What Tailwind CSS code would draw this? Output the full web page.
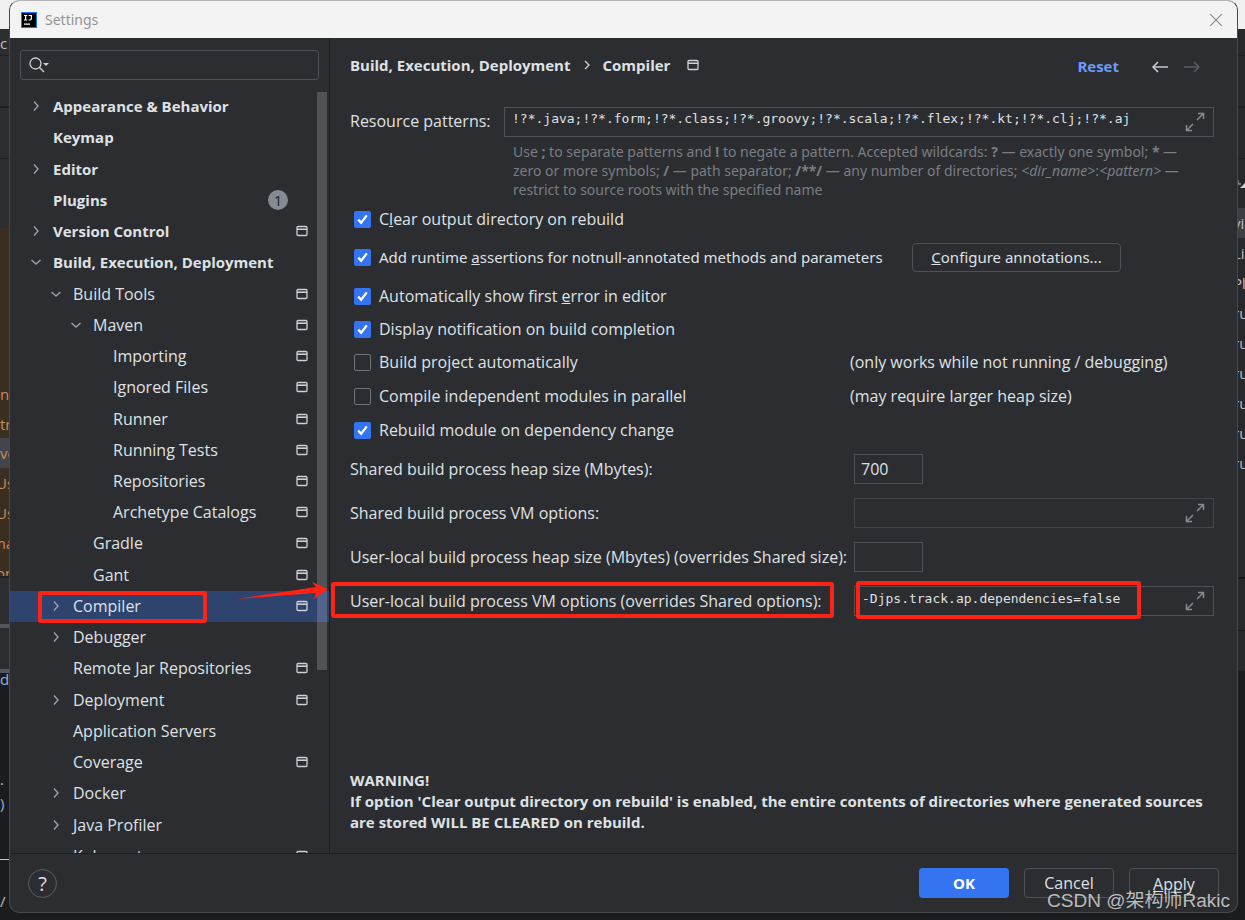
<!DOCTYPE html>
<html lang="en">
<head>
<meta charset="utf-8">
<meta name="viewport" content="width=device-width, initial-scale=1">
<title>Settings</title>
<script src="https://cdn.jsdelivr.net/npm/@tailwindcss/browser@4"></script>
</head>
<body class="relative min-h-screen overflow-hidden bg-[#1b1c1f] font-['Open_Sans','Noto_Sans',sans-serif] text-[15px] leading-5 text-[#dfe1e5]">

<svg class="hidden" aria-hidden="true">
  <symbol id="proj" viewBox="0 0 12 12"><rect x="1" y="1.5" width="10" height="9" rx="1" fill="none" stroke="#ced0d6" stroke-width="1.3"/><path d="M1 4.2H11" stroke="#ced0d6" stroke-width="1.6"/></symbol>
  <symbol id="right" viewBox="0 0 12 12"><path d="M4 1.5L8 6L4 10.5" fill="none" stroke="#9da0a8" stroke-width="1.4"/></symbol>
  <symbol id="down" viewBox="0 0 12 12"><path d="M1.5 4L6 8L10.5 4" fill="none" stroke="#9da0a8" stroke-width="1.4"/></symbol>
  <symbol id="tick" viewBox="0 0 17 17"><path d="M4.2 8.6L7.2 11.8L12.8 4.4" fill="none" stroke="#fff" stroke-width="2.3"/></symbol>
  <symbol id="expand" viewBox="0 0 20 20"><path d="M13 1.5H18.5V7M18.5 1.5L12 8M7 18.5H1.5V13M1.5 18.5L8 12" fill="none" stroke="#868a91" stroke-width="1.5"/></symbol>
</svg>

<!-- Editor window behind the dialog -->
<div class="absolute inset-0 flex justify-between overflow-hidden text-[15px] leading-[30px]" aria-hidden="true">
  <div class="flex w-5 flex-col overflow-hidden whitespace-nowrap text-[#c98a5e]">
    <div class="h-[29px] shrink-0 bg-[#f0f0f0]"></div>
    <div class="h-[27px] shrink-0 border-b border-[#1e1f22] bg-[#2b2d30] leading-7 text-[#bcbec4]">c</div>
    <div class="h-[52px] shrink-0 border-b-2 border-[#1e1f22] bg-[#2b2d30]"></div>
    <div class="h-[51px] shrink-0 border-b border-[#1e1f22] bg-[#2b2d30]"></div>
    <div class="h-[69px] shrink-0 bg-[#2b2d30]"></div>
    <div class="h-[151px] shrink-0 bg-[#3a2e20]"></div>
    <div class="h-[30px] shrink-0 bg-[#3a2e20]">n</div>
    <div class="h-[29px] shrink-0 bg-[#3a2e20]">tr</div>
    <div class="h-[30px] shrink-0 bg-[#43454a]">ve</div>
    <div class="h-[30px] shrink-0 bg-[#3a2e20]"><span class="-ml-1">Us</span></div>
    <div class="h-[30px] shrink-0 bg-[#3a2e20]"><span class="-ml-1">Us</span></div>
    <div class="h-[30px] shrink-0 bg-[#3a2e20]"><span class="-ml-2">ma</span></div>
    <div class="h-[20px] shrink-0 overflow-hidden border-b-2 border-[#1e1f22] bg-[#3a2e20]"><span class="-ml-1">on</span></div>
    <div class="h-[50px] shrink-0 border-b-4 border-[#55575c] bg-[#2b2d30]"></div>
    <div class="h-[45px] shrink-0 border-b-4 border-[#55575c] bg-[#2b2d30]"></div>
    <div class="h-[94px] shrink-0 leading-3 text-[#8fb0d8]">d</div>
    <div class="h-[21px] shrink-0 leading-6 text-[#bcbec4]">.</div>
    <div class="h-[72px] shrink-0 border-b border-[#c8c8c8] text-[#8fb0d8]">)</div>
    <div class="h-[26px] shrink-0"></div>
    <div class="h-[30px] shrink-0 text-[#bcbec4]">/</div>
  </div>
  <div class="flex w-5 flex-col overflow-hidden whitespace-nowrap text-[#bcbec4]">
    <div class="h-[29px] shrink-0 bg-[#f0f0f0]"></div>
    <div class="h-[27px] shrink-0 border-b border-[#1e1f22] bg-[#26282b]"></div>
    <div class="h-[52px] shrink-0 border-b-2 border-[#1e1f22] bg-[#26282b]"></div>
    <div class="h-[51px] shrink-0 border-b border-[#1e1f22] bg-[#26282b]"></div>
    <div class="flex h-[49px] shrink-0 items-center justify-end bg-[#26282b]">
      <svg class="size-2" viewBox="0 0 8 8"><path d="M1 0V4H4" fill="none" stroke="#bcbec4"/><path d="M8 3V8H3Z" fill="#ced0d6"/></svg>
    </div>
    <div class="h-[30px] shrink-0 bg-[#3c3e43] pl-2">yi</div>
    <div class="h-[30px] shrink-0 bg-[#26282b] pl-2">Li</div>
    <div class="h-[30px] shrink-0 bg-[#26282b] pl-2">Pl</div>
    <div class="h-[30px] shrink-0 bg-[#26282b] pl-2">ru</div>
    <div class="h-[30px] shrink-0 bg-[#26282b] pl-2">ru</div>
    <div class="h-[30px] shrink-0 bg-[#26282b] pl-2">ru</div>
    <div class="h-[30px] shrink-0 bg-[#26282b] pl-2">ru</div>
    <div class="h-[30px] shrink-0 bg-[#26282b] pl-2">ru</div>
    <div class="h-[131px] shrink-0 border-b-2 border-[#17181a] bg-[#26282b] pl-2">ru</div>
    <div class="h-[52px] shrink-0 border-b border-[#17181a] bg-[#26282b]"></div>
    <div class="h-[40px] shrink-0 bg-[#26282b]"></div>
  </div>
</div>

<main class="relative mr-[7px] ml-[9px] flex h-[913px] flex-col overflow-hidden rounded-[10px] border border-[#47494d] border-t-[#b4b4b4] bg-[#2b2d30]">
  <header class="flex h-[37px] shrink-0 items-center gap-2 bg-[#f3f3f3] pr-[11px] pl-[11px] font-['Noto_Sans',sans-serif] text-sm text-[#949494]">
    <svg class="size-4" viewBox="0 0 16 16"><rect x=".5" y=".5" width="15" height="15" fill="#000" stroke="#087cfa"/><path d="M3 3.5H6.2M4.6 3.5V8M3 8H6.2M7.6 3.5H10.4V6.6Q10.4 8 9 8H7.6M3 12.2H9" fill="none" stroke="#fff" stroke-width="1.2"/></svg>
    <h1 class="flex-1">Settings</h1>
    <button class="grid size-5 place-items-center" aria-label="Close"><svg class="size-3" viewBox="0 0 12 12"><path d="M0 0L12 12M12 0L0 12" stroke="#8a8a8a" stroke-width="1.1"/></svg></button>
  </header>

  <div class="flex min-h-0 flex-1">
    <!-- Category tree -->
    <nav class="relative flex w-80 shrink-0 flex-col overflow-hidden border-r border-[#1e1f22] text-base leading-5" aria-label="Settings categories">
      <label class="mx-[10px] mt-3 flex h-[30px] shrink-0 items-center rounded-[3px] border border-[#4e5157] pl-2">
        <svg class="h-4 w-5 shrink-0" viewBox="0 0 20 16"><circle cx="6.5" cy="6.5" r="5.5" fill="none" stroke="#ced0d6" stroke-width="1.3"/><path d="M10.5 10.5L15 15" stroke="#ced0d6" stroke-width="1.4"/><path d="M14 6H20L17 9Z" fill="#ced0d6"/></svg>
        <input type="search" aria-label="Search settings" class="min-w-0 flex-1 bg-transparent px-1 outline-none">
      </label>
      <ul class="mt-[11px] grid h-[781px] shrink-0 auto-rows-fr *:flex *:items-center *:pr-[21px] *:pb-px">
        <li class="gap-[11px] pl-5 text-[15px] font-bold"><svg class="size-3"><use href="#right"/></svg><a href="#">Appearance &amp; Behavior</a></li>
        <li class="pl-[43px] text-[15px] font-bold"><a href="#">Keymap</a></li>
        <li class="gap-[11px] pl-5 text-[15px] font-bold"><svg class="size-3"><use href="#right"/></svg><a href="#">Editor</a></li>
        <li class="pl-[43px] text-[15px] font-bold"><a href="#" class="flex-1">Plugins</a><span class="mr-5 grid size-5 place-items-center rounded-full bg-[#868a91] font-normal text-[#1e1f22]">1</span></li>
        <li class="gap-[11px] pl-5 text-[15px] font-bold"><svg class="size-3"><use href="#right"/></svg><a href="#" class="flex-1">Version Control</a><svg class="size-3"><use href="#proj"/></svg></li>
        <li class="gap-[11px] pl-5 text-[15px] font-bold"><svg class="size-3"><use href="#down"/></svg><a href="#">Build, Execution, Deployment</a></li>
        <li class="gap-[11px] pl-10"><svg class="size-3"><use href="#down"/></svg><a href="#" class="flex-1">Build Tools</a><svg class="size-3"><use href="#proj"/></svg></li>
        <li class="gap-[11px] pl-[60px]"><svg class="size-3"><use href="#down"/></svg><a href="#" class="flex-1">Maven</a><svg class="size-3"><use href="#proj"/></svg></li>
        <li class="pl-[103px]"><a href="#" class="flex-1">Importing</a><svg class="size-3"><use href="#proj"/></svg></li>
        <li class="pl-[103px]"><a href="#" class="flex-1">Ignored Files</a><svg class="size-3"><use href="#proj"/></svg></li>
        <li class="pl-[103px]"><a href="#" class="flex-1">Runner</a><svg class="size-3"><use href="#proj"/></svg></li>
        <li class="pl-[103px]"><a href="#" class="flex-1">Running Tests</a><svg class="size-3"><use href="#proj"/></svg></li>
        <li class="pl-[103px]"><a href="#" class="flex-1">Repositories</a><svg class="size-3"><use href="#proj"/></svg></li>
        <li class="pl-[103px]"><a href="#" class="flex-1">Archetype Catalogs</a><svg class="size-3"><use href="#proj"/></svg></li>
        <li class="pl-[83px]"><a href="#" class="flex-1">Gradle</a><svg class="size-3"><use href="#proj"/></svg></li>
        <li class="pl-[83px]"><a href="#" class="flex-1">Gant</a><svg class="size-3"><use href="#proj"/></svg></li>
        <li class="relative gap-[11px] bg-[#2e436e] pl-10"><svg class="size-3"><use href="#right"/></svg><a href="#" aria-current="page" class="flex-1">Compiler</a><svg class="size-3"><use href="#proj"/></svg>
          <span class="absolute top-0 left-7 z-10 h-8 w-[169px] rounded-[3px] border-4 border-[#ff2316]"></span>
          <svg class="absolute -top-[11px] right-px z-10 h-5 w-[92px]" viewBox="0 0 92 20"><path d="M0 19L80 7L76 2L92 9L78 19L80 13Z" fill="#ff2316"/></svg>
        </li>
        <li class="gap-[11px] pl-10"><svg class="size-3"><use href="#right"/></svg><a href="#">Debugger</a></li>
        <li class="pl-[63px]"><a href="#" class="flex-1">Remote Jar Repositories</a><svg class="size-3"><use href="#proj"/></svg></li>
        <li class="gap-[11px] pl-10"><svg class="size-3"><use href="#right"/></svg><a href="#" class="flex-1">Deployment</a><svg class="size-3"><use href="#proj"/></svg></li>
        <li class="pl-[63px]"><a href="#">Application Servers</a></li>
        <li class="pl-[63px]"><a href="#" class="flex-1">Coverage</a><svg class="size-3"><use href="#proj"/></svg></li>
        <li class="gap-[11px] pl-10"><svg class="size-3"><use href="#right"/></svg><a href="#">Docker</a></li>
        <li class="gap-[11px] pl-10"><svg class="size-3"><use href="#right"/></svg><a href="#">Java Profiler</a></li>
        <li class="pl-[63px]"><a href="#" class="flex-1">Kubernetes</a><svg class="size-3"><use href="#proj"/></svg></li>
      </ul>
      <div class="absolute top-[54px] right-[2px] h-[578px] w-[10px] bg-white/18"></div>
    </nav>

    <!-- Compiler page -->
    <section class="flex min-w-0 flex-1 flex-col pr-[23px] pl-5 text-base leading-5">
      <div class="mt-[17px] flex h-5 items-center text-[15px]">
        <h2 class="flex items-center font-bold"><span>Build, Execution, Deployment</span><svg class="mx-[10px] size-3" viewBox="0 0 12 12"><path d="M4 2L8 6L4 10" fill="none" stroke="#ced0d6" stroke-width="1.4"/></svg><span>Compiler</span></h2>
        <svg class="ml-[17px] size-3"><use href="#proj"/></svg>
        <button class="ml-auto pt-px font-bold text-[#6b9bfa]">Reset</button>
        <button class="ml-[33px] pt-1" aria-label="Back"><svg class="h-3 w-4" viewBox="0 0 16 12"><path d="M1 6H16" stroke="#9da0a8" stroke-width="2"/><path d="M6 1L1 6L6 11" fill="none" stroke="#ced0d6" stroke-width="1.5"/></svg></button>
        <button class="mr-[14px] ml-4 pt-1" aria-label="Forward" disabled><svg class="h-3 w-4" viewBox="0 0 16 12"><path d="M0 6H15" stroke="#4e5157" stroke-width="2"/><path d="M10 1L15 6L10 11" fill="none" stroke="#5a5d63" stroke-width="1.5"/></svg></button>
      </div>

      <div class="mt-8 flex">
        <label for="patterns" class="w-[154px] shrink-0 pt-1">Resource patterns:</label>
        <div class="min-w-0 flex-1">
          <div class="flex h-[30px] items-center border border-[#4e5157] pr-2">
            <input id="patterns" class="h-full min-w-0 flex-1 bg-transparent pb-[7px] pl-[7px] font-['DejaVu_Sans_Mono',monospace] text-[13px] outline-none" value="!?*.java;!?*.form;!?*.class;!?*.groovy;!?*.scala;!?*.flex;!?*.kt;!?*.clj;!?*.aj">
            <button aria-label="Expand"><svg class="size-5"><use href="#expand"/></svg></button>
          </div>
          <p class="mt-[5px] mb-px pl-[9px] font-['Noto_Sans',sans-serif] text-[14px] leading-[19px] whitespace-nowrap text-[#7a7d83]">Use <b>;</b> to separate patterns and <b>!</b> to negate a pattern. Accepted wildcards: <b>?</b> — exactly one symbol; <b>*</b> —<br>zero or more symbols; <b>/</b> — path separator; <b>/**/</b> — any number of directories; <i>&lt;dir_name&gt;</i>:<i>&lt;pattern&gt;</i> —<br>restrict to source roots with the specified name</p>
        </div>
      </div>

      <div class="mt-[3px] flex flex-col pl-1">
        <label class="flex h-8 items-center gap-2"><span class="grid *:col-start-1 *:row-start-1"><input type="checkbox" checked class="size-[17px] appearance-none rounded-[2px] bg-[#3574f0]"><svg class="pointer-events-none size-[17px]"><use href="#tick"/></svg></span><span>C<u>l</u>ear output directory on rebuild</span></label>
        <div class="flex h-11 items-center font-['Noto_Sans',sans-serif] text-[15px]">
          <label class="flex w-[542px] items-center gap-2"><span class="grid *:col-start-1 *:row-start-1"><input type="checkbox" checked class="size-[17px] appearance-none rounded-[2px] bg-[#3574f0]"><svg class="pointer-events-none size-[17px]"><use href="#tick"/></svg></span><span>Add runtime <u>a</u>ssertions for notnull-annotated methods and parameters</span></label>
          <button class="ml-4 h-[29px] w-[209px] rounded-[4px] border border-[#4e5157]"><u>C</u>onfigure annotations...</button>
        </div>
        <label class="flex h-[34px] items-center gap-2"><span class="grid *:col-start-1 *:row-start-1"><input type="checkbox" checked class="size-[17px] appearance-none rounded-[2px] bg-[#3574f0]"><svg class="pointer-events-none size-[17px]"><use href="#tick"/></svg></span><span>Automatically show first <u>e</u>rror in editor</span></label>
        <label class="flex h-8 items-center gap-2"><span class="grid *:col-start-1 *:row-start-1"><input type="checkbox" checked class="size-[17px] appearance-none rounded-[2px] bg-[#3574f0]"><svg class="pointer-events-none size-[17px]"><use href="#tick"/></svg></span><span>Display notification on build completion</span></label>
        <div class="grid h-[34px] grid-cols-[496px_1fr] items-center">
          <label class="flex items-center gap-2"><input type="checkbox" class="size-[17px] appearance-none rounded-[2px] border border-[#6f737a]"><span>Build project automatically</span></label>
          <span>(only works while not running / debugging)</span>
        </div>
        <div class="grid h-[34px] grid-cols-[496px_1fr] items-center">
          <label class="flex items-center gap-2"><input type="checkbox" class="size-[17px] appearance-none rounded-[2px] border border-[#6f737a]"><span>Compile independent modules in parallel</span></label>
          <span>(may require larger heap size)</span>
        </div>
        <label class="flex h-[34px] items-center gap-2"><span class="grid *:col-start-1 *:row-start-1"><input type="checkbox" checked class="size-[17px] appearance-none rounded-[2px] bg-[#3574f0]"><svg class="pointer-events-none size-[17px]"><use href="#tick"/></svg></span><span>Rebuild module on dependency change</span></label>
      </div>

      <div class="mt-[7px] grid grid-cols-[504px_1fr] items-center gap-y-[14px] *:[label]:pb-px">
        <label for="sheap">Shared build process heap size (Mbytes):</label>
        <input id="sheap" value="700" class="h-[30px] w-[69px] border border-[#4e5157] bg-transparent px-[6px] outline-none">
        <label for="svm">Shared build process VM options:</label>
        <div class="flex h-[30px] items-center border border-[#43454a] pr-2"><input id="svm" class="min-w-0 flex-1 bg-transparent px-2 outline-none"><button aria-label="Expand"><svg class="size-5"><use href="#expand"/></svg></button></div>
        <label for="uheap">User-local build process heap size (Mbytes) (overrides Shared size):</label>
        <input id="uheap" class="h-[30px] w-[69px] border border-[#4e5157] bg-transparent px-[6px] outline-none">
        <label for="uvm" class="relative">User-local build process VM options (overrides Shared options):<span class="absolute -top-[9px] -left-[19px] h-9 w-[503px] rounded-[3px] border-4 border-[#ff2316]"></span></label>
        <div class="relative flex h-[30px] items-center border border-[#4e5157] pr-2"><input id="uvm" value="-Djps.track.ap.dependencies=false" class="h-full min-w-0 flex-1 bg-transparent pb-[6px] pl-[7px] font-['DejaVu_Sans_Mono',monospace] text-[13px] outline-none"><button aria-label="Expand"><svg class="size-5"><use href="#expand"/></svg></button><span class="pointer-events-none absolute -top-[6px] left-px h-[38px] w-[285px] rounded-[3px] border-4 border-[#ff2316]"></span></div>
      </div>

      <p class="mt-auto mb-5 text-[15px] leading-[21px] font-bold">WARNING!<br>If option 'Clear output directory on rebuild' is enabled, the entire contents of directories where generated sources are stored WILL BE CLEARED on rebuild.</p>
    </section>
  </div>

  <footer class="flex h-[59px] shrink-0 items-center gap-[15px] border-t border-[#1e1f22] pr-[18px] pl-[18px] text-base leading-5">
    <button class="mr-auto grid size-[29px] place-items-center rounded-full border border-[#5a5d63] text-xl" aria-label="Help">?</button>
    <button class="h-[30px] w-[90px] rounded-[4px] bg-[#3574f0] text-[15px] font-bold text-white">OK</button>
    <button class="h-[30px] w-[90px] rounded-[4px] border border-[#4e5157]">Cancel</button>
    <button class="h-[30px] w-[90px] rounded-[4px] border border-[#4e5157] pt-px"><u>A</u>pply</button>
  </footer>
</main>
<div class="absolute right-[15px] bottom-[3px] font-['Liberation_Sans','Noto_Sans_CJK_SC',sans-serif] text-[19px] leading-8 text-white/70 text-shadow-sm">CSDN @架构师Rakic</div>
</body>
</html>
